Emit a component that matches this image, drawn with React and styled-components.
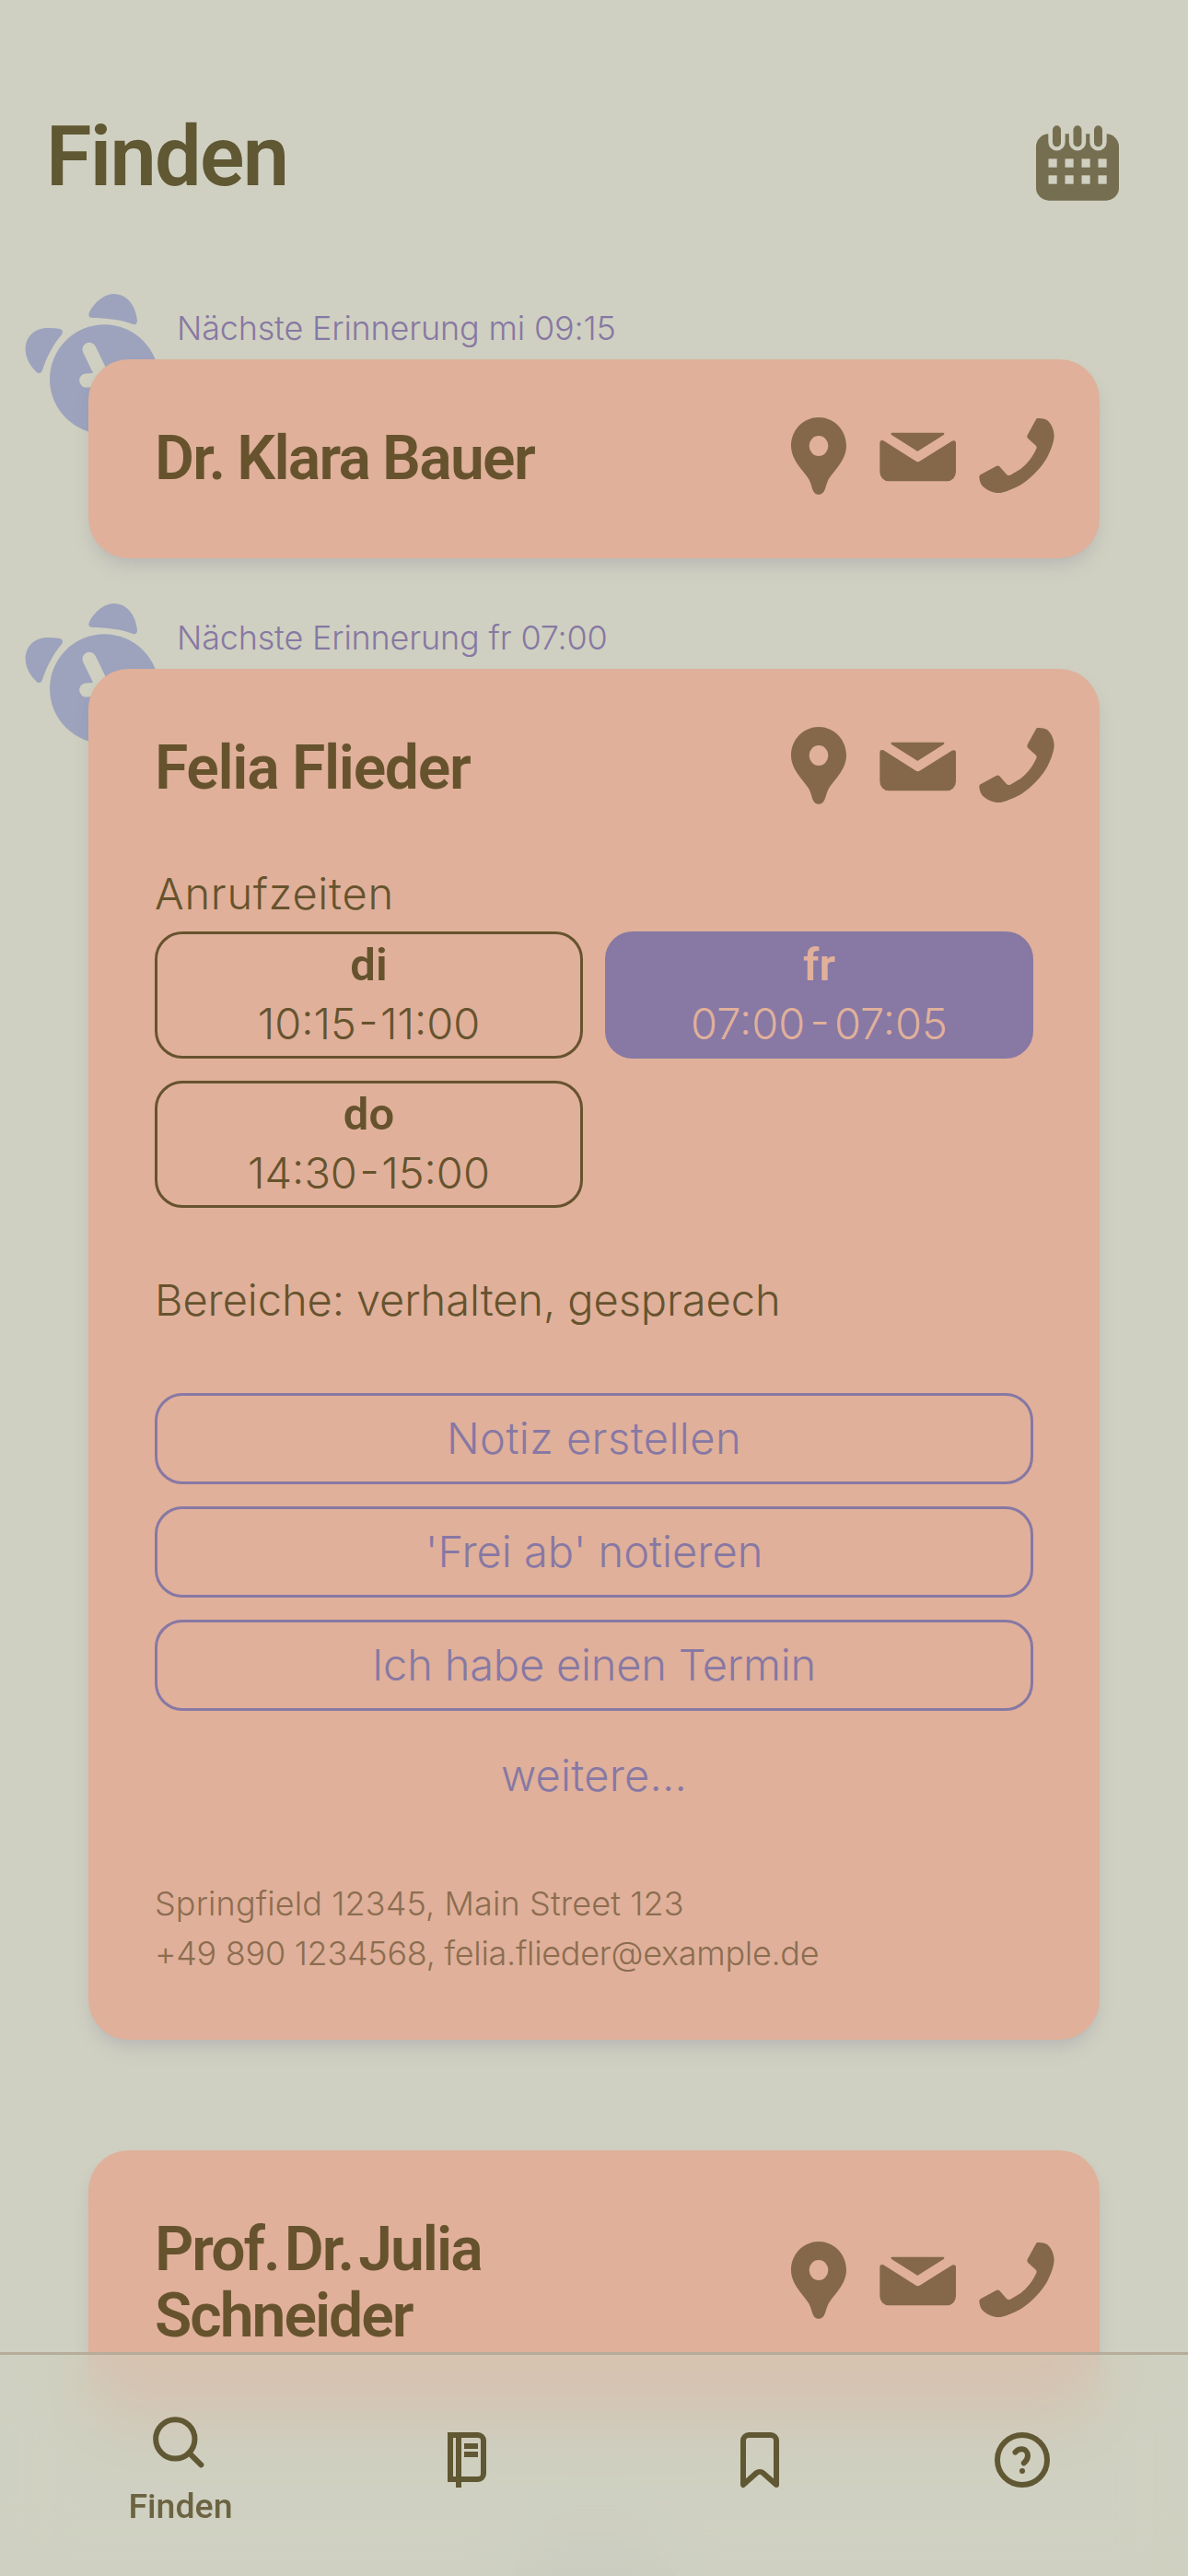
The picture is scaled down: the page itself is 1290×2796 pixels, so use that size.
import React from "react";
import styled, { createGlobalStyle } from "styled-components";

const color = {
  page: "#cfd0c1",
  card: "#e0b09a",
  heading: "#605733",
  ink: "#66532e",
  inkSoft: "#8b6d50",
  contactIcon: "#846849",
  calendar: "#766e50",
  accent: "#8778a4",
  alarm: "#9da3bd",
  navLabel: "#6c6342",
};

const strongFont = `"Roboto", "Inter", "Liberation Sans", sans-serif`;

const GlobalStyle = createGlobalStyle`
  *, *::before, *::after { box-sizing: border-box; }
  html, body { margin: 0; height: 100%; overflow: hidden; background: ${color.page}; }
  body { font-family: "Inter", "Liberation Sans", sans-serif; font-weight: 345; color: ${color.ink}; }
  h1, h2, p { margin: 0; font-size: inherit; font-weight: inherit; }
  svg { display: block; flex: none; }
`;

const Screen = styled.div`
  height: 2796px;
  overflow: hidden;
  background: ${color.page};
`;

const Header = styled.header`
  display: flex;
  justify-content: space-between;
  align-items: flex-start;
  height: 270px;
  padding: 114px 75px 0 50px;
`;

const PageTitle = styled.h1`
  && {
    padding-top: 3px;
    font-family: ${strongFont};
    font-size: 90px;
    font-weight: 560;
  }
  line-height: 108px;
  letter-spacing: -1.7px;
  color: ${color.heading};
`;

const CalendarButton = styled.div`
  padding-top: 22px;
`;

const Entry = styled.section`
  position: relative;
  padding: 0 96px;
`;

const AlarmBadge = styled.div`
  position: absolute;
  left: 26px;
  top: 46px;
`;

const Reminder = styled.div`
  height: 120px;
  padding: 59px 0 0 96px;
  font-size: 36px;
  line-height: 54px;
  letter-spacing: -0.18px;
  color: ${color.accent};
`;

const Card = styled.article`
  position: relative;
  padding: 69px 72px ${(p) => (p.$open ? 67 : 75)}px;
  border-radius: 44px;
  background: ${color.card};
  box-shadow: 0 12px 20px -3px rgba(145, 140, 160, 0.2), 0 8px 14px -6px rgba(145, 140, 165, 0.24);
`;

const CardHead = styled.div`
  display: flex;
  justify-content: space-between;
  align-items: center;
  margin-right: -24px;
`;

const Name = styled.h2`
  && {
    margin-bottom: -3px;
    padding-top: 3px;
    font-family: ${strongFont};
    font-size: 66px;
    font-weight: 560;
  }
  width: 450px;
  line-height: 72px;
  letter-spacing: ${(p) => p.$ls}px;
  word-spacing: ${(p) => p.$ws}px;
`;

const Contacts = styled.div`
  display: flex;
  gap: 23.3px;
  height: 72px;
  align-items: center;
`;

const Label = styled.div`
  height: ${(p) => p.$height || 60}px;
  margin-top: ${(p) => p.$top}px;
  font-size: 47px;
  line-height: 60px;
  letter-spacing: ${(p) => p.$ls || 0}px;
`;

const Slots = styled.div`
  display: grid;
  grid-template-columns: 1fr 1fr;
  gap: 24px;
`;

const Slot = styled.div`
  height: 138px;
  padding: 2px 3px 4px;
  border: 3px solid ${(p) => (p.$active ? color.accent : color.ink)};
  border-radius: 30px;
  background: ${(p) => (p.$active ? color.accent : "transparent")};
  color: ${(p) => (p.$active ? color.card : color.ink)};
  font-size: 47px;
  line-height: 63px;
  text-align: center;
`;

const Day = styled.div`
  font-family: ${strongFont};
  font-size: 49px;
  font-weight: 600;
`;

const Hours = styled.div`
  word-spacing: ${(p) => p.$ws}px;
`;

const Actions = styled.div`
  display: flex;
  flex-direction: column;
  gap: 24px;
  margin-top: 71px;
`;

const Action = styled.div`
  height: 99px;
  border: 3px solid ${color.accent};
  border-radius: 30px;
  font-size: 47px;
  line-height: 91px;
  letter-spacing: ${(p) => p.$ls || 0}px;
  text-align: center;
  color: ${color.accent};
`;

const MoreLink = styled(Action)`
  margin-top: -3px;
  margin-bottom: -1px;
  border-color: transparent;
`;

const Address = styled.div`
  margin-top: 63px;
  font-size: 36px;
  line-height: 54px;
  color: ${color.inkSoft};
`;

const AddressLine = styled.div`
  letter-spacing: ${(p) => p.$ls || 0}px;
`;

const ListEnd = styled.div`
  width: 200px;
  height: 200px;
  margin: 120px auto 0;
  border-radius: 50%;
  background: ${color.alarm};
  opacity: 0.16;
`;

const TabBar = styled.nav`
  position: fixed;
  left: 0;
  right: 0;
  bottom: 0;
  display: grid;
  grid-template-columns: 320px 302px 334px 236px;
  height: 243px;
  padding-left: 36px;
  border-top: 3px solid #b6ac99;
  background: rgba(207, 208, 193, 0.56);
  backdrop-filter: blur(34px);
  color: ${color.heading};
`;

const Tab = styled.div`
  display: flex;
  flex-direction: column;
  align-items: center;
  gap: 4px;
  padding-top: ${(p) => (p.$active ? 61 : 78)}px;
`;

const TabLabel = styled.span`
  font-family: ${strongFont};
  font-size: 37.5px;
  font-weight: 550;
  line-height: 54px;
  color: ${color.navLabel};
`;

const CalendarIcon = () => (
  <svg width="90" height="82" viewBox="135 108 270 246">
    <rect x="135" y="136" width="270" height="217" rx="42" fill={color.calendar} />
    {[202.5, 270, 337.5].map((x) => (
      <g key={x}>
        <path d={`M${x - 27.5} 130V163a27.5 27.5 0 0 0 55 0V130z`} fill={color.page} />
        <rect x={x - 13.5} y="109" width="27" height="69" rx="13.5" fill={color.calendar} />
      </g>
    ))}
    {[175.5, 229.5, 283.5, 337.5].map((x) =>
      [217, 271].map((y) => <rect key={`${x}-${y}`} x={x} y={y} width="27.5" height="28" fill={color.page} />)
    )}
  </svg>
);

const AlarmIcon = () => (
  <svg width="150" height="160" viewBox="78 648 450 480">
    <g fill={color.alarm}>
      <path d="M83 838C82 798 112 766 160 768Q180 768 196 771Q208 776 202 788C174 820 152 862 138 905Q134 918 122 914C102 898 83 868 83 838z" />
      <path d="M290 719C302 692 335 657 371 657C416 657 444 700 447 744Q447 759 433 756C395 741 345 735 300 735Q286 733 290 719z" />
      <circle cx="340" cy="935" r="178" />
    </g>
    <path
      d="M291 838L338 935L281 939"
      fill="none"
      stroke={color.page}
      strokeWidth="45"
      strokeLinecap="round"
      strokeLinejoin="round"
    />
  </svg>
);

const PinIcon = () => (
  <svg width="84" height="84" viewBox="81 249 252 252" fill={color.contactIcon}>
    <path
      fillRule="evenodd"
      d="M207 249C157 249 117 290 117 342C117 386 153 418 174 449C187 470 184 500 207 500C230 500 228 470 240 449C261 418 297 386 297 342C297 290 257 249 207 249zM207 309a31 33 0 1 1 0 66a31 33 0 1 1 0-66z"
    />
  </svg>
);

const MailIcon = () => (
  <svg width="84" height="84" viewBox="404 249 252 252" fill={color.contactIcon}>
    <path d="M445 299H612Q618 301 613 306L531 358Q528 361 525 358L443 306Q439 300 445 299z" />
    <path d="M405 333Q405 321 417 325L521 391Q529 397 537 391L640 326Q653 322 653 333V427a30 30 0 0 1-30 30H435a30 30 0 0 1-30-30z" />
  </svg>
);

const PhoneIcon = () => (
  <svg width="84" height="84" viewBox="725 249 252 252" fill={color.contactIcon}>
    <path d="M919 252Q938 251 949 257C963 268 973 288 973 311C971 334 960 361 947 385C932 410 902 444 870 465C848 479 820 490 799 495C776 497 750 485 738 471C731 461 729 450 729 442Q729 439 733 436L784 408Q790 405 795 409L818 435Q823 440 830 437L864 417C885 402 905 375 916 349Q917 344 912 340L888 318Q883 313 886 307L914 256Q916 252 919 252z" />
  </svg>
);

const StrokeIcon = ({ children }) => (
  <svg
    width="72"
    height="72"
    viewBox="0 0 24 24"
    fill="none"
    stroke="currentColor"
    strokeWidth="2"
    strokeLinejoin="round"
  >
    {children}
  </svg>
);

const SearchIcon = () => (
  <StrokeIcon>
    <circle cx="10.1" cy="10.1" r="7.05" />
    <path d="M15.1 15.1l4.35 4.35" strokeLinecap="round" />
  </StrokeIcon>
);

const NotebookIcon = () => (
  <StrokeIcon>
    <path d="M6 3H16a2 2 0 0 1 2 2V17a2 2 0 0 1-2 2H6z" strokeLinejoin="miter" />
    <path d="M9 3V22M11 7h5M11 10h5" />
  </StrokeIcon>
);

const BookmarkIcon = () => (
  <StrokeIcon>
    <path d="M6 5a2 2 0 0 1 2-2h8a2 2 0 0 1 2 2v16l-4.7-4.2a2 2 0 0 0-2.6 0L6 21z" />
  </StrokeIcon>
);

const HelpIcon = () => (
  <StrokeIcon>
    <circle cx="12" cy="12" r="9" />
    <path d="M9.5 9.2c.6-.7 1.4-1.1 2.3-1.1 1.3 0 2.2 1.1 2.2 2.4 0 1.2-.5 1.9-1.4 2.6" strokeLinecap="round" />
    <circle cx="12" cy="16" r="1" fill="currentColor" stroke="none" />
  </StrokeIcon>
);

const ContactHead = ({ name, ls, ws }) => (
  <CardHead>
    <Name $ls={ls} $ws={ws}>
      {name}
    </Name>
    <Contacts>
      <PinIcon />
      <MailIcon />
      <PhoneIcon />
    </Contacts>
  </CardHead>
);

const ReminderNote = ({ children }) => (
  <>
    <AlarmBadge>
      <AlarmIcon />
    </AlarmBadge>
    <Reminder>{children}</Reminder>
  </>
);

export default function App() {
  return (
    <>
      <GlobalStyle />
      <Screen>
        <Header>
          <PageTitle>Finden</PageTitle>
          <CalendarButton>
            <CalendarIcon />
          </CalendarButton>
        </Header>

        <Entry>
          <ReminderNote>Nächste Erinnerung mi 09:15</ReminderNote>
          <Card>
            <ContactHead name="Dr. Klara Bauer" ls={-1.7} ws={-1} />
          </Card>
        </Entry>

        <Entry>
          <ReminderNote>Nächste Erinnerung fr 07:00</ReminderNote>
          <Card $open>
            <ContactHead name="Felia Flieder" ls={-1.3} ws={-0.5} />
            <Label $top={73} $height={71} $ls={0.75}>
              Anrufzeiten
            </Label>
            <Slots>
              <Slot>
                <Day>di</Day>
                <Hours $ws={-10.8}>10:15 - 11:00</Hours>
              </Slot>
              <Slot $active>
                <Day>fr</Day>
                <Hours $ws={-8}>07:00 - 07:05</Hours>
              </Slot>
              <Slot>
                <Day>do</Day>
                <Hours $ws={-10.7}>14:30 - 15:00</Hours>
              </Slot>
            </Slots>
            <Label $top={70} $ls={-0.08}>
              Bereiche: verhalten, gespraech
            </Label>
            <Actions>
              <Action $ls={0.45}>Notiz erstellen</Action>
              <Action>'Frei ab' notieren</Action>
              <Action $ls={-0.2}>Ich habe einen Termin</Action>
              <MoreLink $ls={0.25}>weitere...</MoreLink>
            </Actions>
            <Address>
              <AddressLine $ls={0.12}>Springfield 12345, Main Street 123</AddressLine>
              <AddressLine $ls={-0.28}>+49 890 1234568, felia.flieder@example.de</AddressLine>
            </Address>
          </Card>
        </Entry>

        <Entry>
          <Reminder />
          <Card>
            <ContactHead name="Prof. Dr. Julia Schneider" ls={-2} ws={-8.5} />
          </Card>
        </Entry>
        <ListEnd />
      </Screen>

      <TabBar>
        <Tab $active>
          <SearchIcon />
          <TabLabel>Finden</TabLabel>
        </Tab>
        <Tab>
          <NotebookIcon />
        </Tab>
        <Tab>
          <BookmarkIcon />
        </Tab>
        <Tab>
          <HelpIcon />
        </Tab>
      </TabBar>
    </>
  );
}
